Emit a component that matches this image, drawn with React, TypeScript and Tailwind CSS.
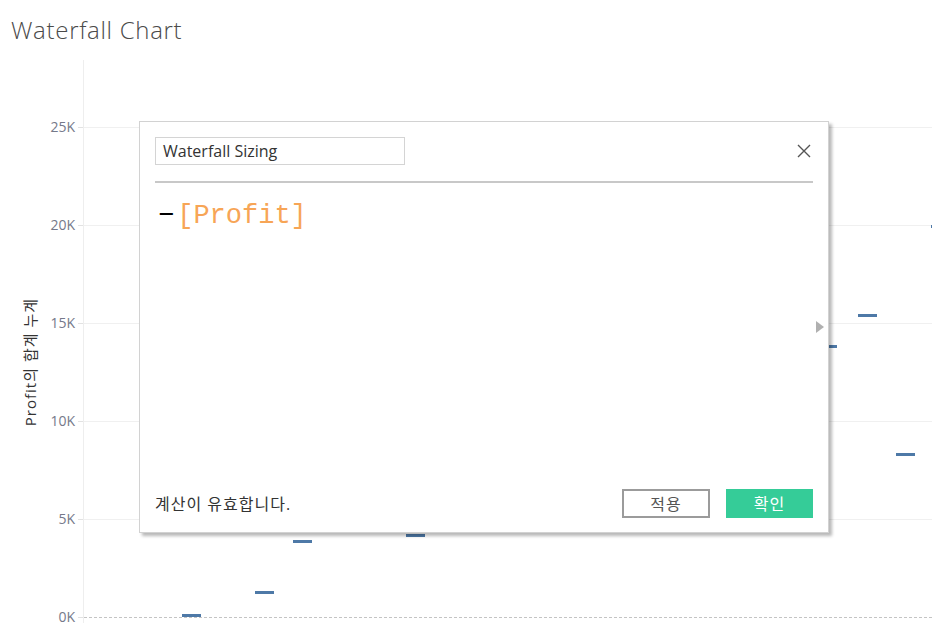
import React from "react";

const ticks = ["25K", "20K", "15K", "10K", "5K"];

// waterfall marks: left / top within the plot area
const bars = [
  { x: 98, y: 554 },
  { x: 171, y: 531 },
  { x: 209, y: 480 },
  { x: 322, y: 474 },
  { x: 734, y: 285 },
  { x: 774, y: 254 },
  { x: 812, y: 393 },
  { x: 847, y: 165 },
];

const sans = "font-['Open_Sans','Noto_Sans_CJK_KR',sans-serif]";

const CalcDialog = () => {
  return (
    <div className="absolute left-[139px] top-[121px] w-[690px] h-[412px] bg-white border border-[#d2d2d2] shadow-[3px_3px_3px_rgba(0,0,0,0.28)]">
      <div className="flex flex-col h-full px-[15px] pt-[15px] pb-[14px]">
        <div className="flex items-center justify-between h-[28px]">
          <div className="w-[250px] h-[28px] border border-[#d4d4d4] px-[7px] flex items-center text-[16px] text-[#333]">
            Waterfall Sizing
          </div>
          <svg width="16" height="16" viewBox="0 0 16 16" className="mr-[1px]">
            <path d="M2 2 L14 14 M14 2 L2 14" stroke="#555" strokeWidth="1.4" fill="none" />
          </svg>
        </div>
        <div className="mt-[16px] h-[2px] bg-[#c8c8c8]" />
        <div className="mt-[18px] ml-[3px] h-[30px] leading-[30px] text-[27px] font-['Liberation_Mono',monospace]">
          <span className="text-black">−</span>
          <span className="ml-[3px] text-[#f7a556]">[Profit]</span>
        </div>
        <div className="flex-1" />
        <div className="flex items-center justify-between">
          <span className="text-[16px] tracking-[1px] text-[#333]">계산이 유효합니다.</span>
          <div className="flex gap-[16px]">
            <button className="w-[88px] h-[29px] border-2 border-[#9b9b9b] bg-white text-[16px] tracking-[1px] text-[#555]">
              적용
            </button>
            <button className="w-[87px] h-[29px] bg-[#35cc98] text-[16px] tracking-[1px] text-white">
              확인
            </button>
          </div>
        </div>
      </div>
      <div className="absolute right-[4px] top-[199px] w-0 h-0 border-y-[6px] border-y-transparent border-l-[8px] border-l-[#b0b0b0]" />
    </div>
  );
};

export default function App() {
  return (
    <div className={`relative w-[932px] h-[623px] overflow-hidden bg-white ${sans}`}>
      <div className="h-[60px] pl-[11px] pt-[14px] text-[24px] tracking-[0.7px] leading-[32px] text-[#4a4a4a] font-light">
        Waterfall Chart
      </div>
      <div className="flex h-[563px]">
        <div className="w-[48px] flex items-center pl-[22px] pt-[41px]">
          <span className="[writing-mode:vertical-rl] [text-orientation:sideways] rotate-180 text-[15px] tracking-[1px] leading-[16px] text-[#333] whitespace-nowrap">
            Profit의 합계 누계
          </span>
        </div>
        <div className="w-[35px] pt-[62px] flex flex-col">
          {ticks.concat(["0K"]).map((t) => (
            <div key={t} className="flex h-[98px] shrink-0 items-start justify-end">
              <span className="text-[14px] leading-[10px] text-[#75798a]">{t}</span>
              <span className="w-[5px] h-px bg-[#e2e2e2] mt-[5px] ml-[3px]" />
            </div>
          ))}
        </div>
        <div className="relative flex-1 border-l border-[#eeeeee] pt-[67px]">
          {ticks.map((t) => (
            <div key={t} className="h-[98px] border-t border-[#f0f0f0]" />
          ))}
          <div className="border-t border-dashed border-[#c4c4c4]" />
          {bars.map((b, i) => (
            <div
              key={i}
              className="absolute w-[19px] h-[3px] bg-[#4e79a7]"
              style={{ left: b.x, top: b.y }}
            />
          ))}
        </div>
      </div>
      <CalcDialog />
    </div>
  );
}
